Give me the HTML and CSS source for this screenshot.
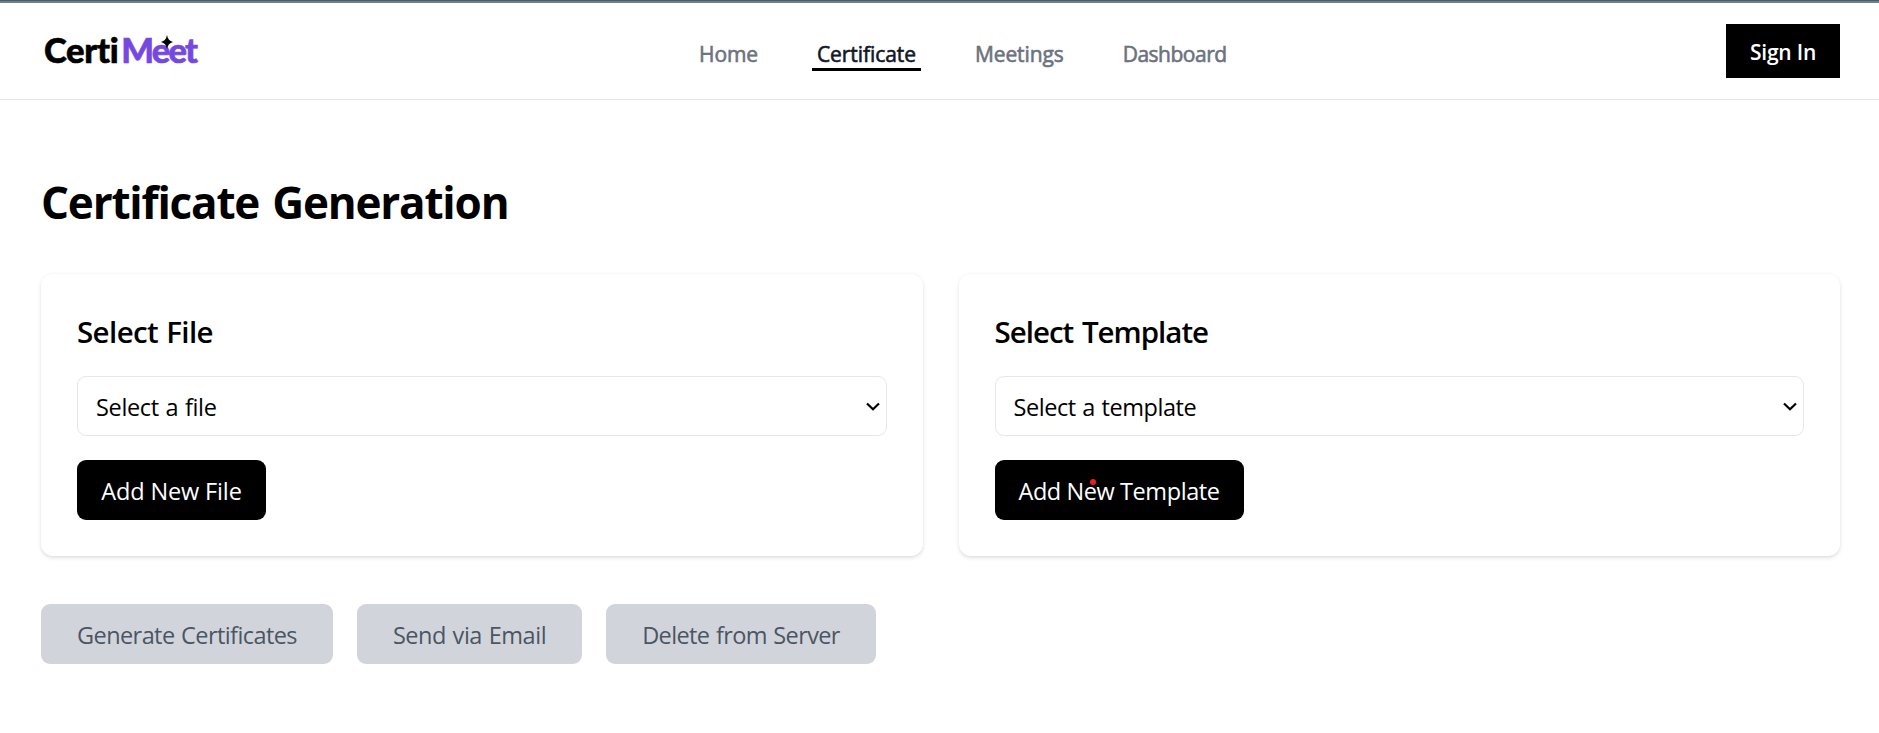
FILE: index.html
```html
<!DOCTYPE html>
<html lang="en">
<head>
<meta charset="utf-8">
<title>CertiMeet</title>
<link rel="stylesheet" href="styles.css">
</head>
<body>
<header class="header">
  <a class="logo"><span class="logo-certi">Certi</span><span class="logo-meet">Meet</span>
    <svg class="logo-star" viewBox="0 0 12 14"><path d="M6 0Q7 5.800 12 7Q7 8.200 6 14Q5 8.200 0 7Q5 5.800 6 0Z"/></svg></a>
  <nav class="nav">
    <a class="link">Home</a>
    <a class="link active">Certificate</a>
    <a class="link">Meetings</a>
    <a class="link dashboard">Dashboard</a>
  </nav>
  <button class="sign-in">Sign In</button>
</header>
<main class="main">
  <h1 class="title">Certificate Generation</h1>
  <div class="cards">
    <section class="card">
      <h2 class="card-title">Select File</h2>
      <div class="select select-file"><span>Select a file</span><svg class="chevron" viewBox="0 0 14 9"><path d="M1 1.500L7 7.300L13 1.500"/></svg></div>
      <button class="add add-file">Add New File</button>
    </section>
    <section class="card">
      <h2 class="card-title template-title">Select Template</h2>
      <div class="select select-template"><span>Select a template</span><svg class="chevron" viewBox="0 0 14 9"><path d="M1 1.500L7 7.300L13 1.500"/></svg></div>
      <button class="add add-template">Add New Template<i class="dot"></i></button>
    </section>
  </div>
  <div class="actions">
    <button class="action generate">Generate Certificates</button>
    <button class="action send">Send via Email</button>
    <button class="action delete">Delete from Server</button>
  </div>
</main>
</body>
</html>
```
FILE: styles.css
```css
* { box-sizing: border-box; }
body { margin: 0; background: #fff; color: #000; font-family: "Open Sans", "Noto Sans", sans-serif; font-size: 23.5px; line-height: 36px; }
button { border: 0; font: inherit; padding: 2px 0 0; white-space: nowrap; }

.header { height: 100px; border-top: 3px solid #6b7f88; border-bottom: 1px solid #e5e7eb; display: flex; align-items: flex-start; padding: 0 39px 0 44px; position: relative; }
.header::before { content: ""; position: absolute; left: 0; right: 0; top: -3px; height: 1px; background: #4a5c69; }
.logo { position: relative; display: flex; width: 155px; font-family: Lato, sans-serif; font-weight: 900; font-size: 34.5px; line-height: 40px; padding-top: 27px; }
.logo-certi { -webkit-text-stroke: .6px #000; letter-spacing: -.3px; }
.logo-meet { color: #7549e0; margin-left: 3px; letter-spacing: -1.8px; -webkit-text-stroke: .6px #7549e0; }
.logo-star { position: absolute; left: 117px; top: 32px; width: 12px; height: 14px; }

.nav { display: flex; margin: 36px 0 0 495px; font-size: 21px; line-height: 31px; color: #6b7280; gap: 49px; -webkit-text-stroke: .6px currentColor; }
.link { height: 32px; padding: 0 5px; letter-spacing: -.1px; }
.active { color: #111827; border-bottom: 3px solid #000; letter-spacing: -.07px; }
.dashboard { letter-spacing: -.5px; }
.sign-in { margin: 21px 0 0 auto; width: 114px; height: 54px; background: #000; color: #fff; font-size: 21px; font-weight: 600; letter-spacing: -.2px; }

.main { padding: 75px 39px 0 41px; }
.title { margin: 0; font-size: 44px; line-height: 54px; font-weight: 700; letter-spacing: -1.2px; word-spacing: 3px; }
.cards { display: grid; grid-template-columns: 1fr 1fr; gap: 36px; margin-top: 45px; }
.card { height: 282px; padding: 36px; border-radius: 12px; box-shadow: 0 1.5px 4.5px rgba(0,0,0,.1), 0 1.5px 3px -1.5px rgba(0,0,0,.1); }
.card-title { margin: 0 0 24px; padding-top: 1px; height: 42px; font-size: 29.5px; line-height: 42px; font-weight: 600; letter-spacing: -.6px; word-spacing: 1px; }
.template-title { letter-spacing: -1px; word-spacing: 2px; }
.select { display: flex; justify-content: space-between; align-items: center; height: 60px; border: 1px solid #e5e7eb; border-radius: 9px; padding: 0 6px 0 18px; }
.select span { padding-top: 2px; }
.select-file { letter-spacing: -.35px; word-spacing: 1px; }
.select-template { letter-spacing: -.45px; word-spacing: 1px; }
.chevron { width: 14px; height: 9px; fill: none; stroke: #000; stroke-width: 2.2; }
.add { position: relative; display: block; margin-top: 24px; height: 60px; border-radius: 9px; background: #000; color: #fff; }
.add-file { width: 189px; letter-spacing: -.14px; }
.add-template { width: 249px; letter-spacing: -.42px; }
.dot { position: absolute; left: 95px; top: 19px; width: 6px; height: 6px; border-radius: 50%; background: #ed1c24; }

.actions { display: flex; gap: 24px; margin-top: 48px; }
.action { height: 60px; border-radius: 9px; background: #d1d5db; color: #4b5563; }
.generate { width: 292px; letter-spacing: -.58px; word-spacing: 1px; }
.send { width: 225px; letter-spacing: -.45px; word-spacing: 1px; }
.delete { width: 270px; letter-spacing: -.62px; word-spacing: 1px; }
```
